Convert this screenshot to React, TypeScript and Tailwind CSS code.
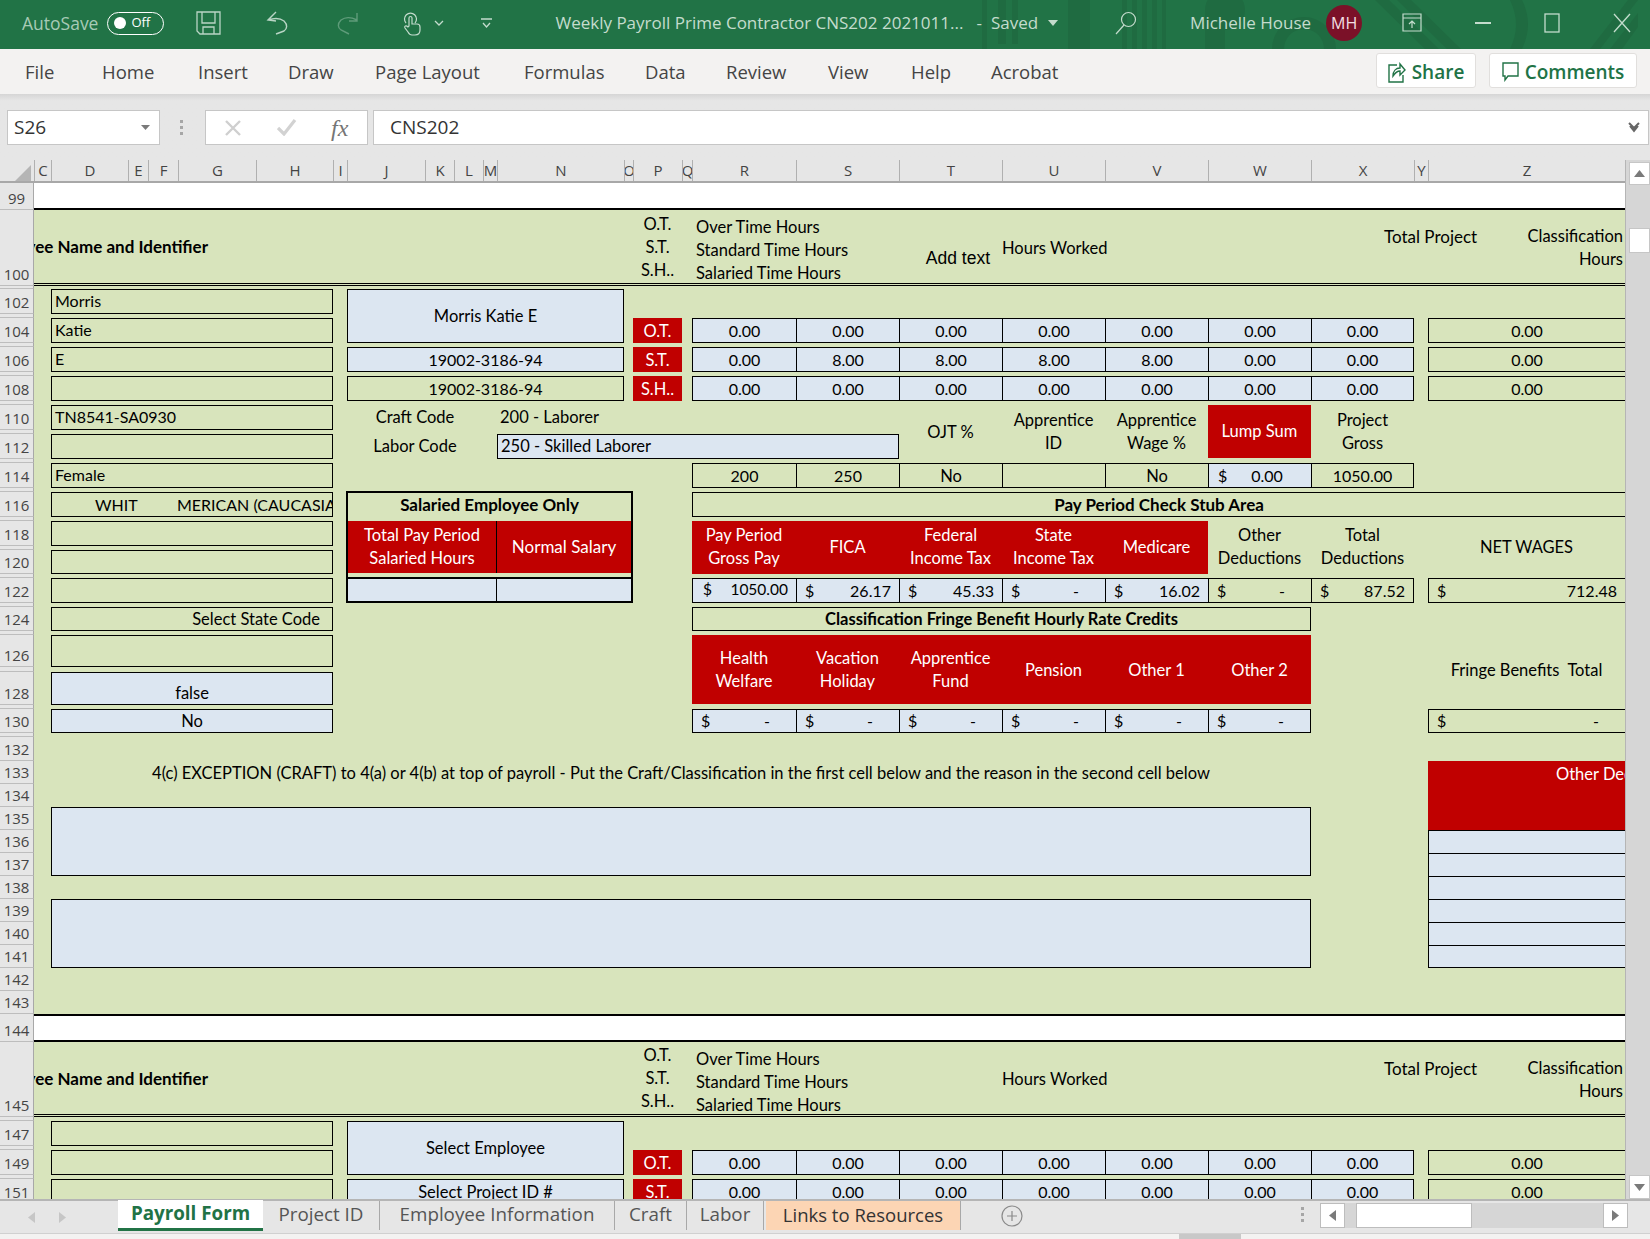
import type { ReactNode } from "react";
import clsx from "clsx";

const sheetCols =
  "grid-cols-[34px_17px_77px_20px_30px_78px_77px_14px_78px_29px_29px_14px_127px_9px_49px_10px_104px_103px_103px_103px_103px_103px_103px_14px_197px]";

const sheetRows =
  "grid-rows-[27px_76px_3px_25px_4px_25px_4px_25px_4px_25px_4px_25px_4px_25px_4px_25px_4px_25px_4px_25px_4px_24px_4px_25px_4px_24px_4px_32px_5px_33px_4px_24px_4px_24px_23px_23px_23px_23px_23px_23px_23px_23px_23px_23px_23px_28px_75px_4px_25px_4px_25px_4px_25px]";

const green = "bg-[#d8e4bc]";
const blue = "bg-[#dce6f1]";
const red = "bg-[#c00000] text-white";
const ui = "font-['Open_Sans',sans-serif]";

const columnHeads = ["C", "D", "E", "F", "G", "H", "I", "J", "K", "L", "M", "N", "O", "P", "Q", "R", "S", "T", "U", "V", "W", "X", "Y", "Z"];

const rowHeads: [string, string][] = [
  ["row-[1]", "99"], ["row-[2]", "100"], ["row-[3]", ""], ["row-[4]", "102"], ["row-[5]", ""], ["row-[6]", "104"],
  ["row-[7]", ""], ["row-[8]", "106"], ["row-[9]", ""], ["row-[10]", "108"], ["row-[11]", ""], ["row-[12]", "110"],
  ["row-[13]", ""], ["row-[14]", "112"], ["row-[15]", ""], ["row-[16]", "114"], ["row-[17]", ""], ["row-[18]", "116"],
  ["row-[19]", ""], ["row-[20]", "118"], ["row-[21]", ""], ["row-[22]", "120"], ["row-[23]", ""], ["row-[24]", "122"],
  ["row-[25]", ""], ["row-[26]", "124"], ["row-[27]", ""], ["row-[28]", "126"], ["row-[29]", ""], ["row-[30]", "128"],
  ["row-[31]", ""], ["row-[32]", "130"], ["row-[33]", ""], ["row-[34]", "132"], ["row-[35]", "133"], ["row-[36]", "134"],
  ["row-[37]", "135"], ["row-[38]", "136"], ["row-[39]", "137"], ["row-[40]", "138"], ["row-[41]", "139"], ["row-[42]", "140"],
  ["row-[43]", "141"], ["row-[44]", "142"], ["row-[45]", "143"], ["row-[46]", "144"], ["row-[47]", "145"], ["row-[48]", ""],
  ["row-[49]", "147"], ["row-[50]", ""], ["row-[51]", "149"], ["row-[52]", ""], ["row-[53]", "151"],
];

const weekCols = ["col-[17]", "col-[18]", "col-[19]", "col-[20]", "col-[21]", "col-[22]", "col-[23]"];

function Cell({ className, children }: { className?: string; children?: ReactNode }) {
  return <div className={clsx("flex items-center justify-center overflow-hidden whitespace-nowrap", className)}>{children}</div>;
}

function Box({ className, children }: { className?: string; children?: ReactNode }) {
  return <Cell className={clsx("border border-black", className)}>{children}</Cell>;
}

function Two({ a, b }: { a: string; b: string }) {
  return (
    <div className="text-center leading-[23px] pb-px">
      <div>{a}</div>
      <div>{b}</div>
    </div>
  );
}

function Money({ className, value }: { className?: string; value: string }) {
  const dash = value === "-";
  return (
    <Cell className={clsx("border-y border-l border-black justify-between! pl-[8px] text-[16px]", dash ? "pr-[26px]" : "pr-[8px]", className)}>
      <span>$</span>
      <span>{value}</span>
    </Cell>
  );
}

// one line of seven hour cells plus the classification total on the right
function HoursRow({ row, values }: { row: string; values: string[] }) {
  return (
    <>
      {values.map((v, i) => (
        <Cell key={i} className={clsx(row, weekCols[i], blue, "border-y border-l border-black pt-px text-[16px]", i === 6 && "border-r")}>
          {v}
        </Cell>
      ))}
      <Cell className={clsx(row, "col-[25] border-y border-l border-black pt-px text-[16px]")}>0.00</Cell>
    </>
  );
}

function BlockHeader({ row, addText }: { row: string; addText?: boolean }) {
  return (
    <>
      <div className={clsx(row, "col-[2/26] border-b-[3px] border-double border-black")} />
      <Cell className={clsx(row, "col-[2/7] justify-end pr-[48px] pb-[2px] font-bold text-[17px]")}>Employee Name and Identifier</Cell>
      <Cell className={clsx(row, "col-[15] overflow-visible")}>
        <div className="text-center leading-[23px] pb-[2px]">
          <div>O.T.</div>
          <div>S.T.</div>
          <div>S.H..</div>
        </div>
      </Cell>
      <Cell className={clsx(row, "col-[17/19] justify-start pl-[4px]")}>
        <div className="leading-[23px] pt-[5px]">
          <div>Over Time Hours</div>
          <div>Standard Time Hours</div>
          <div>Salaried Time Hours</div>
        </div>
      </Cell>
      {addText && (
        <Cell className={clsx(row, "col-[19] justify-end items-end pb-[15px] pr-[12px] font-['Liberation_Sans',sans-serif] text-[17.5px]")}>
          Add text
        </Cell>
      )}
      <Cell className={clsx(row, "col-[20/22] justify-start")}>Hours Worked</Cell>
      <Cell className={clsx(row, "col-[23/26] justify-start items-start pl-[73px] pt-[14px] text-[17px]")}>Total Project</Cell>
      <Cell className={clsx(row, "col-[25] justify-end pr-[2px] items-start pt-[15px]")}>
        <div className="text-right leading-[23px]">
          <div>Classification</div>
          <div>Hours</div>
        </div>
      </Cell>
    </>
  );
}

function TitleBar() {
  return (
    <header className={clsx(ui, "relative h-[49px] bg-[#217346] flex items-center text-[#c4dccd] text-[17px] overflow-hidden")}>
      <svg className="absolute left-[950px] top-0" width="700" height="49" fill="#1f6b41">
        <rect x="32" y="0" width="5" height="49" />
        <rect x="48" y="0" width="8" height="44" />
        <rect x="62" y="0" width="6" height="44" />
        <rect x="118" y="0" width="22" height="49" />
        <rect x="172" y="0" width="5" height="49" />
        <rect x="182" y="0" width="5" height="49" />
        <rect x="192" y="0" width="5" height="49" />
        <rect x="202" y="0" width="5" height="49" />
        <rect x="212" y="0" width="4" height="49" />
        <circle cx="275" cy="10" r="20" />
        <rect x="255" y="10" width="20" height="39" />
        <path d="M322 49a32 32 0 0 1 64 0h-12a20 20 0 0 0-40 0z" />
        <path d="M425 0h14l50 49h-14zM447 0h14l50 49h-14z" />
        <path d="M560 0h12c8 16 8 32 0 49h-12c8-16 8-32 0-49z" />
        <path d="M640 49l38-49h10l-38 49zM660 49l28-36v14l-16 22z" />
      </svg>
      <div className="relative flex items-center w-full pb-[3px]">
        <span className="ml-[22px] text-[#a7cbb6] text-[17.5px]">AutoSave</span>
        <div className="ml-[9px] w-[57px] h-[23px] rounded-full border border-white flex items-center pl-[6px] gap-[5px] text-white text-[13px]">
          <span className="w-[12px] h-[12px] rounded-full bg-white" />
          <span>Off</span>
        </div>
        <svg className="ml-[32px]" width="25" height="24" viewBox="0 0 25 24" fill="none" stroke="#b9d5c5" strokeWidth="1.3">
          <path d="M1 1h23v22H4l-3-3z" />
          <path d="M6 1v11h13V1M7 23v-7h11v7" />
        </svg>
        <svg className="ml-[45px]" width="23" height="24" viewBox="0 0 23 24" fill="none" stroke="#b9d5c5" strokeWidth="1.4">
          <path d="M10 1 2 9l8 1M2 9c6-2 12-2 16 1 4 4 3 8 0 10l-8 3" />
        </svg>
        <svg className="ml-[48px]" width="22" height="24" viewBox="0 0 22 24" fill="none" stroke="#5f9c7a" strokeWidth="1.4">
          <path d="M20 2v8h-8M20 9C14 6 8 6 4 9c-4 4-3 8 0 10l8 4" />
        </svg>
        <svg className="ml-[44px]" width="19" height="25" viewBox="0 0 19 25" fill="none" stroke="#c4dccd" strokeWidth="1.2">
          <path d="M3 12a6 6 0 1 1 9 0" />
          <path d="M6 15V7a1.5 1.5 0 0 1 3 0v6h5c2 0 3 1 3 3v3c0 3-2 5-5 5H9c-2 0-3-1-4-3l-3-4c-1-2 1-3 3-1z" />
        </svg>
        <svg className="ml-[12px]" width="10" height="6" viewBox="0 0 10 6" fill="none" stroke="#c4dccd" strokeWidth="1.3">
          <path d="M1 1l4 4 4-4" />
        </svg>
        <svg className="ml-[37px]" width="11" height="11" viewBox="0 0 11 11" fill="none" stroke="#c4dccd" strokeWidth="1.3">
          <path d="M0 1h11M2 5l3.5 4L9 5" />
        </svg>
        <span className="ml-[63px] whitespace-nowrap">Weekly Payroll Prime Contractor CNS202 2021011...</span>
        <span className="ml-[13px]">-</span>
        <span className="ml-[9px]">Saved</span>
        <svg className="ml-[10px]" width="10" height="6" viewBox="0 0 10 6" fill="#c4dccd">
          <path d="M0 0h10L5 6z" />
        </svg>
        <svg className="ml-[57px]" width="22" height="24" viewBox="0 0 22 24" fill="none" stroke="#c4dccd" strokeWidth="1.2">
          <circle cx="13.5" cy="8.5" r="7" />
          <path d="M9 14 1 23" />
        </svg>
        <span className="ml-[53px] whitespace-nowrap">Michelle House</span>
        <div className="ml-[15px] w-[36px] h-[36px] rounded-full bg-[#7b1128] flex items-center justify-center text-[#f3dfe3] text-[16px]">MH</div>
        <svg className="ml-[40px]" width="20" height="20" viewBox="0 0 20 20" fill="none" stroke="#c4dccd" strokeWidth="1.2">
          <path d="M1 1h18v17H1zM1 5h18M10 15V8M7 11l3-3 3 3" />
        </svg>
        <svg className="ml-[53px]" width="16" height="2" viewBox="0 0 16 2" fill="#c4dccd">
          <rect width="16" height="2" />
        </svg>
        <svg className="ml-[53px]" width="16" height="20" viewBox="0 0 16 20" fill="none" stroke="#c4dccd" strokeWidth="1.3">
          <rect x="1" y="1" width="14" height="18" />
        </svg>
        <svg className="ml-[53px]" width="18" height="20" viewBox="0 0 18 20" fill="none" stroke="#c4dccd" strokeWidth="1.3">
          <path d="M1 1l16 18M17 1 1 19" />
        </svg>
      </div>
    </header>
  );
}

function Ribbon() {
  const tabs: [string, string][] = [
    ["File", "ml-[25px] w-[30px]"],
    ["Home", "ml-[47px] w-[53px]"],
    ["Insert", "ml-[43px] w-[47px]"],
    ["Draw", "ml-[43px] w-[45px]"],
    ["Page Layout", "ml-[42px] w-[106px]"],
    ["Formulas", "ml-[43px] w-[80px]"],
    ["Data", "ml-[41px] w-[40px]"],
    ["Review", "ml-[41px] w-[60px]"],
    ["View", "ml-[42px] w-[41px]"],
    ["Help", "ml-[42px] w-[40px]"],
    ["Acrobat", "ml-[40px] w-[71px]"],
  ];
  return (
    <nav className={clsx(ui, "h-[45px] bg-[#f3f2f1] flex items-center text-[18.5px] text-[#444]")}>
      {tabs.map(([t, m]) => (
        <span key={t} className={clsx(m, "whitespace-nowrap")}>
          {t}
        </span>
      ))}
      <button className="ml-auto self-start mt-[4px] pt-[3px] w-[100px] h-[35px] bg-white border border-[#e1dfdd] rounded-[3px] flex items-center justify-center gap-[6px] text-[#217346] text-[19px] font-semibold">
        <svg width="18" height="21" viewBox="0 0 18 21" fill="none" stroke="#217346" strokeWidth="1.4">
          <path d="M9 3H1v17h14v-7M5 14c0-5 3-8 7-8V2l5 6-5 5V9c-3 0-5 2-7 5z" />
        </svg>
        Share
      </button>
      <button className="ml-[13px] mr-[13px] self-start mt-[4px] pt-[3px] w-[148px] h-[35px] bg-white border border-[#e1dfdd] rounded-[3px] flex items-center justify-center gap-[6px] text-[#217346] text-[19px] font-semibold">
        <svg width="17" height="20" viewBox="0 0 17 20" fill="none" stroke="#217346" strokeWidth="1.4">
          <path d="M1 1h15v13H6l-3 4v-4H1z" />
        </svg>
        Comments
      </button>
    </nav>
  );
}

function FormulaBar() {
  return (
    <div className={clsx(ui, "h-[66px] bg-gradient-to-b from-[#d5d5d5] from-0% via-[#e6e6e6] via-10% to-[#e6e6e6] flex items-start pt-[16px] pl-[7px] pr-px text-[#333]")}>
      <div className="w-[153px] h-[35px] bg-white border border-[#c6c6c6] flex items-center justify-between pl-[6px] pr-[9px] text-[19px]">
        S26
        <svg width="9" height="5" viewBox="0 0 9 5" fill="#7a7a7a">
          <path d="M0 0h9L4.500 5z" />
        </svg>
      </div>
      <div className="ml-[20px] mr-[22px] mt-[10px] flex flex-col gap-[3px]">
        <span className="w-[3px] h-[3px] bg-[#a6a6a6]" />
        <span className="w-[3px] h-[3px] bg-[#a6a6a6]" />
        <span className="w-[3px] h-[3px] bg-[#a6a6a6]" />
      </div>
      <div className="w-[163px] h-[35px] bg-white border border-[#c6c6c6] flex items-center text-[#7a7a7a]">
        <svg className="ml-[19px]" width="16" height="16" viewBox="0 0 16 16" fill="none" stroke="#cfcfcf" strokeWidth="2.4">
          <path d="M1 1l14 14M15 1 1 15" />
        </svg>
        <svg className="ml-[36px]" width="20" height="17" viewBox="0 0 20 17" fill="none" stroke="#d2d2d2" strokeWidth="3.200">
          <path d="M1 9l6 6L18 1" />
        </svg>
        <span className="ml-[34px] font-['Liberation_Serif',serif] italic text-[24px] text-[#757575]">fx</span>
      </div>
      <div className="ml-[5px] flex-1 h-[35px] bg-white border border-[#c6c6c6] flex items-center justify-between pl-[16px] pr-[8px] text-[19px]">
        CNS202
        <svg width="12" height="11" viewBox="0 0 12 11" fill="none" stroke="#666" strokeWidth="2">
          <path d="M1 1l5 5 5-5M2 4l4 5 4-5" />
        </svg>
      </div>
    </div>
  );
}

function Sheet() {
  return (
    <div className="w-[1625px] flex flex-col text-[16.5px] text-black font-['Lato',sans-serif]">
      <div className={clsx(ui, "grid h-[23px] bg-[#e6e6e6] border-b-2 border-[#a8a8a8] text-[15px] text-[#444]", sheetCols)}>
        <div className="relative">
          <svg className="absolute left-[15px] top-[5px]" width="16" height="16" viewBox="0 0 16 16" fill="#b5b5b5">
            <path d="M16 0v16H0z" />
          </svg>
        </div>
        {columnHeads.map((c) => (
          <div key={c} className="flex items-center justify-center overflow-hidden border-l border-[#b0b0b0]">
            {c}
          </div>
        ))}
      </div>
      <div className="h-[1016px] overflow-hidden">
        <div className={clsx("grid", sheetCols, sheetRows, green)}>
          {rowHeads.map(([row, label]) => (
            <div key={row} className={clsx(ui, row, "col-[1] bg-[#e6e6e6] border-b border-r border-b-[#bdbdbd] border-r-[#a8a8a8] flex items-end justify-center text-[15px] leading-[22px] text-[#444]")}>
              {label}
            </div>
          ))}

          {/* 99 */}
          <div className="row-[1] col-[2/26] bg-white border-b-2 border-black" />
          <BlockHeader row="row-[2]" addText />

          {/* employee boxes, first block */}
          <Box className="row-[4] col-[3/8] justify-start pl-[3px] pb-px text-[16px]">Morris</Box>
          <Box className="row-[6] col-[3/8] justify-start pl-[3px] pb-px text-[16px]">Katie</Box>
          <Box className="row-[8] col-[3/8] justify-start pl-[3px] pb-px text-[16px]">E</Box>
          <Box className="row-[10] col-[3/8]" />
          <Box className="row-[12] col-[3/8] justify-start pl-[3px] pb-px text-[16px]">TN8541-SA0930</Box>
          <Box className="row-[14] col-[3/8]" />
          <Box className="row-[16] col-[3/8] justify-start pl-[3px] pb-px text-[16px]">Female</Box>
          <Box className="row-[18] col-[3/8] justify-start text-[16px]">
            <span className="w-[126px] shrink-0 pl-[43px]">WHIT</span>
            <span className="flex-1 overflow-hidden">
              <span className="block -ml-[1px]">MERICAN (CAUCASIAN)</span>
            </span>
          </Box>
          <Box className="row-[20] col-[3/8]" />
          <Box className="row-[22] col-[3/8]" />
          <Box className="row-[24] col-[3/8]" />
          <Box className="row-[26] col-[3/8] justify-end pr-[12px]">Select State Code</Box>
          <Box className="row-[28] col-[3/8]" />
          <Box className={clsx("row-[30] col-[3/8] items-end leading-[22px]", blue)}>false</Box>
          <Box className={clsx("row-[32] col-[3/8]", blue)}>No</Box>

          {/* name and project id */}
          <Box className={clsx("row-[4/7] col-[9/14]", blue)}>Morris Katie E</Box>
          <Box className={clsx("row-[8] col-[9/14] text-[16px]", blue)}>19002-3186-94</Box>
          <Box className="row-[10] col-[9/14] text-[16px]">19002-3186-94</Box>
          <Cell className="row-[12] col-[9/12]">Craft Code</Cell>
          <Cell className="row-[12] col-[13/16] justify-start pl-[3px]">200 - Laborer</Cell>
          <Cell className="row-[14] col-[9/12]">Labor Code</Cell>
          <Box className={clsx("row-[14] col-[13/19] justify-start pl-[3px]", blue)}>250 - Skilled Laborer</Box>

          {/* hour codes */}
          <Cell className={clsx("row-[6] col-[15] pt-px", red)}>O.T.</Cell>
          <Cell className={clsx("row-[8] col-[15] pt-px", red)}>S.T.</Cell>
          <Cell className={clsx("row-[10] col-[15] pt-px", red)}>S.H..</Cell>

          <HoursRow row="row-[6]" values={["0.00", "0.00", "0.00", "0.00", "0.00", "0.00", "0.00"]} />
          <HoursRow row="row-[8]" values={["0.00", "8.00", "8.00", "8.00", "8.00", "0.00", "0.00"]} />
          <HoursRow row="row-[10]" values={["0.00", "0.00", "0.00", "0.00", "0.00", "0.00", "0.00"]} />

          {/* code headers */}
          <Cell className="row-[12/15] col-[19]">OJT %</Cell>
          <Cell className="row-[12/15] col-[20]"><Two a="Apprentice" b="ID" /></Cell>
          <Cell className="row-[12/15] col-[21]"><Two a="Apprentice" b="Wage %" /></Cell>
          <Cell className={clsx("row-[12/15] col-[22] mb-px", red)}>Lump Sum</Cell>
          <Cell className="row-[12/15] col-[23]"><Two a="Project" b="Gross" /></Cell>

          <Cell className="row-[16] col-[17] border-y border-l border-black text-[16px]">200</Cell>
          <Cell className="row-[16] col-[18] border-y border-l border-black text-[16px]">250</Cell>
          <Cell className="row-[16] col-[19] border-y border-l border-black pt-px">No</Cell>
          <Cell className="row-[16] col-[20] border-y border-l border-black" />
          <Cell className="row-[16] col-[21] border-y border-l border-black pt-px">No</Cell>
          <Cell className={clsx("row-[16] col-[22] border-y border-l border-black justify-start pl-[9px] gap-[24px] text-[16px]", blue)}>
            <span>$</span>
            <span>0.00</span>
          </Cell>
          <Cell className="row-[16] col-[23] border border-black text-[16px]">1050.00</Cell>

          {/* salaried table */}
          <div className="row-[18/25] col-[9/15] -ml-px -mt-px border-2 border-black flex flex-col">
            <div className="h-[28px] flex items-center justify-center pb-[5px] font-bold text-[17px]">Salaried Employee Only</div>
            <div className="h-[52px] flex bg-[#c00000] text-white">
              <div className="w-[149px] flex items-center justify-center border-r border-black"><Two a="Total Pay Period" b="Salaried Hours" /></div>
              <div className="flex-1 flex items-center justify-center text-[17px]">Normal Salary</div>
            </div>
            <div className="h-[4px]" />
            <div className={clsx("flex-1 flex border-t-2 border-black", blue)}>
              <div className="w-[149px] border-r border-black" />
            </div>
          </div>

          {/* check stub */}
          <Cell className="row-[18] col-[17/26] border-y border-l border-black font-bold text-[17px]">Pay Period Check Stub Area</Cell>
          <Cell className={clsx("row-[20/23] col-[17]", red)}><Two a="Pay Period" b="Gross Pay" /></Cell>
          <Cell className={clsx("row-[20/23] col-[18]", red)}>FICA</Cell>
          <Cell className={clsx("row-[20/23] col-[19]", red)}><Two a="Federal" b="Income Tax" /></Cell>
          <Cell className={clsx("row-[20/23] col-[20]", red)}><Two a="State" b="Income Tax" /></Cell>
          <Cell className={clsx("row-[20/23] col-[21]", red)}>Medicare</Cell>
          <Cell className="row-[20/23] col-[22]"><Two a="Other" b="Deductions" /></Cell>
          <Cell className="row-[20/23] col-[23]"><Two a="Total" b="Deductions" /></Cell>
          <Cell className="row-[20/23] col-[25]">NET WAGES</Cell>

          <Money className={clsx("row-[24] col-[17] pb-[2px] pl-[10px]! text-[15.5px]!", blue)} value="1050.00" />
          <Money className={clsx("row-[24] col-[18]", blue)} value="26.17" />
          <Money className={clsx("row-[24] col-[19]", blue)} value="45.33" />
          <Money className={clsx("row-[24] col-[20]", blue)} value="-" />
          <Money className={clsx("row-[24] col-[21]", blue)} value="16.02" />
          <Money className="row-[24] col-[22]" value="-" />
          <Money className="row-[24] col-[23] border-r" value="87.52" />
          <Money className="row-[24] col-[25]" value="712.48" />

          {/* fringe */}
          <Cell className="row-[26] col-[17/23] border border-black font-bold">Classification Fringe Benefit Hourly Rate Credits</Cell>
          <Cell className={clsx("row-[28/31] col-[17] mb-px pt-[2px]", red)}><Two a="Health" b="Welfare" /></Cell>
          <Cell className={clsx("row-[28/31] col-[18] mb-px pt-[2px]", red)}><Two a="Vacation" b="Holiday" /></Cell>
          <Cell className={clsx("row-[28/31] col-[19] mb-px pt-[2px]", red)}><Two a="Apprentice" b="Fund" /></Cell>
          <Cell className={clsx("row-[28/31] col-[20] mb-px pt-[2px]", red)}>Pension</Cell>
          <Cell className={clsx("row-[28/31] col-[21] mb-px pt-[2px]", red)}>Other 1</Cell>
          <Cell className={clsx("row-[28/31] col-[22] mb-px pt-[2px]", red)}>Other 2</Cell>
          <Cell className="row-[28/31] col-[25]">Fringe Benefits&nbsp; Total</Cell>

          <Money className={clsx("row-[32] col-[17]", blue)} value="-" />
          <Money className={clsx("row-[32] col-[18]", blue)} value="-" />
          <Money className={clsx("row-[32] col-[19]", blue)} value="-" />
          <Money className={clsx("row-[32] col-[20]", blue)} value="-" />
          <Money className={clsx("row-[32] col-[21]", blue)} value="-" />
          <Money className={clsx("row-[32] col-[22] border-r", blue)} value="-" />
          <Money className="row-[32] col-[25]" value="-" />

          {/* 4(c) */}
          <Cell className="row-[35] col-[3/23] pt-px text-[16.5px]">
            4(c) EXCEPTION (CRAFT) to 4(a) or 4(b) at top of payroll - Put the Craft/Classification in the first cell below and the reason in the second cell below
          </Cell>
          <Box className={clsx("row-[37/40] col-[3/23]", blue)} />
          <Box className={clsx("row-[41/44] col-[3/23]", blue)} />

          <Cell className={clsx("row-[35/38] col-[25] items-start justify-start pl-[128px] pt-px", red)}>Other Deductions</Cell>
          <div className={clsx("row-[38] col-[25] border-t border-l border-black", blue)} />
          <div className={clsx("row-[39] col-[25] border-t border-l border-black", blue)} />
          <div className={clsx("row-[40] col-[25] border-t border-l border-black", blue)} />
          <div className={clsx("row-[41] col-[25] border-t border-l border-black", blue)} />
          <div className={clsx("row-[42] col-[25] border-t border-l border-black", blue)} />
          <div className={clsx("row-[43] col-[25] border-y border-l border-black", blue)} />

          {/* 144 */}
          <div className="row-[46] col-[2/26] bg-white border-y-2 border-black" />
          <BlockHeader row="row-[47]" />

          <Box className="row-[49] col-[3/8]" />
          <Box className="row-[51] col-[3/8]" />
          <Box className="row-[53] col-[3/8]" />
          <Box className={clsx("row-[49/52] col-[9/14]", blue)}>Select Employee</Box>
          <Box className={clsx("row-[53] col-[9/14] items-start leading-[24px]", blue)}>Select Project ID #</Box>
          <Cell className={clsx("row-[51] col-[15] pt-px", red)}>O.T.</Cell>
          <Cell className={clsx("row-[53] col-[15] pt-px", red)}>S.T.</Cell>
          <HoursRow row="row-[51]" values={["0.00", "0.00", "0.00", "0.00", "0.00", "0.00", "0.00"]} />
          <HoursRow row="row-[53]" values={["0.00", "0.00", "0.00", "0.00", "0.00", "0.00", "0.00"]} />
        </div>
      </div>
    </div>
  );
}

function VerticalScroll() {
  return (
    <div className="w-[25px] bg-[#d6d6d6] flex flex-col items-end border-l border-[#b5b5b5] pt-[2px]">
      <div className="w-[21px] h-[23px] bg-white border border-[#c6c6c6] flex items-center justify-center">
        <svg width="11" height="7" viewBox="0 0 11 7" fill="#7a7a7a"><path d="M0 7h11L5.500 0z" /></svg>
      </div>
      <div className="mt-[43px] w-[21px] h-[25px] bg-white border border-[#c6c6c6]" />
      <div className="mt-auto w-[21px] h-[24px] bg-white border border-[#c6c6c6] flex items-center justify-center">
        <svg width="11" height="7" viewBox="0 0 11 7" fill="#7a7a7a"><path d="M0 0h11L5.500 7z" /></svg>
      </div>
    </div>
  );
}

function SheetTabs() {
  return (
    <footer className={clsx(ui, "h-[34px] bg-[#e6e6e6] border-t-2 border-[#b5b5b5] flex items-stretch text-[18.8px] text-[#555]")}>
      <div className="w-[118px] flex items-center pl-[28px] gap-[24px]">
        <svg width="7" height="11" viewBox="0 0 7 11" fill="#c6c6c6"><path d="M7 0v11L0 5.500z" /></svg>
        <svg width="7" height="11" viewBox="0 0 7 11" fill="#c6c6c6"><path d="M0 0v11l7-5.500z" /></svg>
      </div>
      <div className="w-[145px] h-[31px] -mt-px pb-px bg-white border-b-[3px] border-[#217346] text-[#217346] font-bold flex items-center justify-center">Payroll Form</div>
      <div className="w-[117px] h-[29px] pb-[2px] flex items-center justify-center border-r border-[#a8a8a8]">Project ID</div>
      <div className="w-[235px] h-[29px] pb-[2px] flex items-center justify-center border-r border-[#a8a8a8]">Employee Information</div>
      <div className="w-[72px] h-[29px] pb-[2px] flex items-center justify-center border-r border-[#a8a8a8]">Craft</div>
      <div className="w-[77px] h-[29px] pb-[2px] flex items-center justify-center border-r border-[#a8a8a8]">Labor</div>
      <div className="ml-[2px] w-[195px] h-[29px] pb-[2px] bg-[#fcd5b4] text-[#333] text-[18.5px] flex items-center justify-center border-r border-[#a8a8a8]">Links to Resources</div>
      <svg className="ml-[40px] mt-[4px]" width="22" height="22" viewBox="0 0 22 22" fill="none" stroke="#8a8a8a" strokeWidth="1.2">
        <circle cx="11" cy="11" r="10" />
        <path d="M11 6v10M6 11h10" />
      </svg>
      <div className="ml-[278px] mt-[6px] flex flex-col gap-[3px]">
        <span className="w-[3px] h-[3px] bg-[#a6a6a6]" />
        <span className="w-[3px] h-[3px] bg-[#a6a6a6]" />
        <span className="w-[3px] h-[3px] bg-[#a6a6a6]" />
      </div>
      <div className="ml-[16px] mt-[2px] w-[308px] h-[25px] bg-[#d6d6d6] flex">
        <div className="w-[25px] bg-white border border-[#bdbdbd] flex items-center justify-center">
          <svg width="7" height="11" viewBox="0 0 7 11" fill="#7a7a7a"><path d="M7 0v11L0 5.500z" /></svg>
        </div>
        <div className="ml-[11px] w-[116px] bg-white border border-[#bdbdbd]" />
        <div className="ml-auto w-[25px] bg-white border border-[#bdbdbd] flex items-center justify-center">
          <svg width="7" height="11" viewBox="0 0 7 11" fill="#7a7a7a"><path d="M0 0v11l7-5.500z" /></svg>
        </div>
      </div>
    </footer>
  );
}

export default function App() {
  return (
    <div className="w-[1650px] h-[1239px] overflow-hidden flex flex-col bg-[#e6e6e6]">
      <TitleBar />
      <Ribbon />
      <FormulaBar />
      <div className="flex h-[1039px]">
        <Sheet />
        <VerticalScroll />
      </div>
      <SheetTabs />
      <div className="h-[6px] bg-[#f3f2f1] border-t border-[#d0d0d0] flex">
        <div className="ml-[1179px] w-[62px] bg-[#c8c8c8]" />
      </div>
    </div>
  );
}
